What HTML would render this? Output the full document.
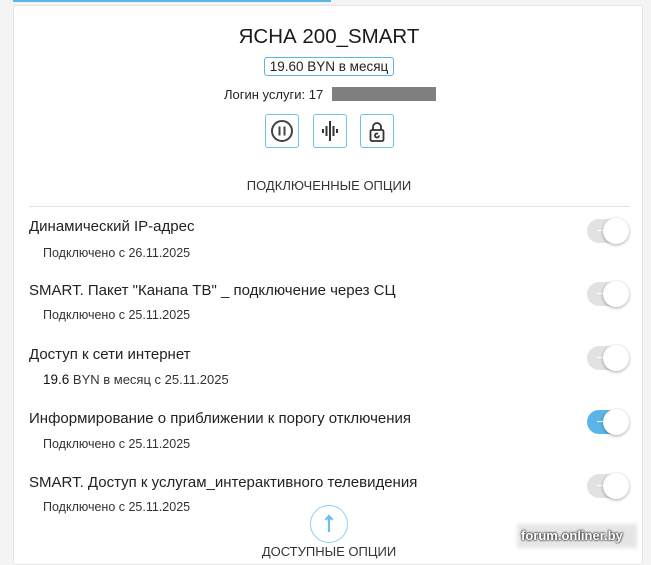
<!DOCTYPE html>
<html><head><meta charset="utf-8"><style>
*{margin:0;padding:0;box-sizing:border-box}
body{width:651px;height:557px;overflow:hidden;background:#f4f4f4;font-family:"Liberation Sans",sans-serif;color:#222;position:relative}
.bar{position:absolute;left:13px;top:0;width:318px;height:2px;background:#5bb5e8}
.card{position:absolute;left:13px;top:5px;width:630px;height:560px;background:#fff;border:1px solid #e6e6e6;border-radius:3px}
.abs{position:absolute}
.c{position:absolute;left:0;width:630px;text-align:center}
.price{display:inline-block;border:1px solid #5bb5e8;border-radius:3px;padding:1px 5px;font-size:13.5px}
.btn{position:absolute;top:108px;width:34px;height:34px;border:1px solid #6cc0ee;border-radius:3px}
.btn svg{position:absolute;left:0;top:0}
.t{position:absolute;left:15px;font-size:15px;color:#222}
.s{position:absolute;left:29px;font-size:12.5px;color:#333}
.tg{position:absolute;left:573px;width:41px;height:24px;border-radius:12px;background:#e2e2e2}
.tg::after{content:"";position:absolute;right:-1px;top:-1px;width:26px;height:26px;border-radius:50%;background:#fff;box-shadow:0 1px 3px rgba(0,0,0,.35)}
.tg.on{background:#5bb5e8}
.tg::before{content:"";position:absolute;left:10px;top:11px;width:7px;height:1px;background:#fff}
</style></head><body>
<div class="bar"></div>
<div class="card">
<div class="c" style="top:19px;font-size:20.5px;color:#1a1a1a">ЯСНА 200_SMART</div>
<div class="c" style="top:51px"><span class="price">19.60 BYN в месяц</span></div>
<div class="abs" style="left:210px;top:81px;font-size:13px">Логин услуги: 17</div>
<div class="abs" style="left:318px;top:81px;width:104px;height:14px;background:#7f7f7f"></div>
<div class="btn" style="left:251px"><svg width="32" height="32"><circle cx="16" cy="16" r="10" fill="none" stroke="#444" stroke-width="2"/><rect x="12.5" y="11.5" width="2" height="9" fill="#444"/><rect x="17.5" y="11.5" width="2" height="9" fill="#444"/></svg></div>
<div class="btn" style="left:299px"><svg width="32" height="32" stroke="#333" stroke-width="2"><line x1="9" y1="14" x2="9" y2="18"/><line x1="12.5" y1="11" x2="12.5" y2="21"/><line x1="16" y1="6" x2="16" y2="26"/><line x1="19.5" y1="11" x2="19.5" y2="21"/><line x1="23" y1="14" x2="23" y2="18"/></svg></div>
<div class="btn" style="left:346px"><svg width="32" height="32" fill="none" stroke="#333" stroke-width="1.8"><path d="M12 15v-3a4 4 0 0 1 8 0v3"/><rect x="9.5" y="15" width="13" height="11" rx="1.5"/><path d="M18 20.5a2 2 0 1 1-1-1.7"/></svg></div>
<div class="c" style="top:172px;font-size:13px;color:#333">ПОДКЛЮЧЕННЫЕ ОПЦИИ</div>
<div class="abs" style="left:15px;top:200px;width:601px;height:1px;background:#e2e2e2"></div>

<div class="t" style="top:212px">Динамический IP-адрес</div>
<div class="s" style="top:240px">Подключено с 26.11.2025</div>
<div class="tg" style="top:213px"></div>

<div class="t" style="top:276px">SMART. Пакет "Канапа ТВ" _ подключение через СЦ</div>
<div class="s" style="top:302px">Подключено с 25.11.2025</div>
<div class="tg" style="top:276px"></div>

<div class="t" style="top:340px">Доступ к сети интернет</div>
<div class="s" style="top:366px;font-size:13px"><span style="font-size:13.5px;color:#111">19.6</span> BYN в месяц с 25.11.2025</div>
<div class="tg" style="top:340px"></div>

<div class="t" style="top:404px">Информирование о приближении к порогу отключения</div>
<div class="s" style="top:431px">Подключено с 25.11.2025</div>
<div class="tg on" style="top:404px"></div>

<div class="t" style="top:468px">SMART. Доступ к услугам_интерактивного телевидения</div>
<div class="s" style="top:494px">Подключено с 25.11.2025</div>
<div class="tg" style="top:468px"></div>

<div class="abs" style="left:296px;top:499px;width:38px;height:38px;border:1px solid #8fd0f3;border-radius:50%"><svg width="36" height="36"><path d="M18 10v16M14.5 14L18 10l3.5 4" fill="none" stroke="#6cc0ee" stroke-width="2.2"/></svg></div>
<div class="c" style="top:538px;font-size:13px;color:#333">ДОСТУПНЫЕ ОПЦИИ</div>
</div>
<div class="abs" style="left:517px;top:524px;width:120px;height:24px;background:rgba(225,225,225,.85);filter:blur(2px)"></div>
<div class="abs" style="left:521px;top:528px;font-size:13px;font-weight:bold;color:#fff;text-shadow:0 0 2px #333,0 0 2px #333,0 0 1px #222">forum.onliner.by</div>
</body></html>
